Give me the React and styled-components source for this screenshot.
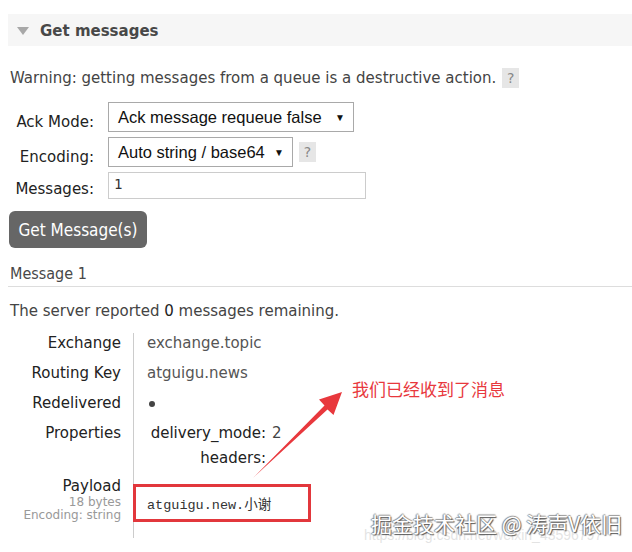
import React from 'react';
import styled, { createGlobalStyle } from 'styled-components';

const GlobalStyle = createGlobalStyle`
  body {
    margin: 0;
    background: #fff;
    font-family: "DejaVu Sans", Verdana, sans-serif;
    color: #444;
  }
`;

const Page = styled.div`
  position: relative;
  width: 632px;
  height: 552px;
  overflow: hidden;
  padding: 14px 0 0 8px;
  box-sizing: border-box;
`;

const SectionHeader = styled.div`
  height: 32px;
  background: #f6f6f6;
  display: flex;
  align-items: center;
  gap: 11px;
  padding: 2px 0 0 9px;
  box-sizing: border-box;
  font-size: 15px;
  font-weight: bold;
  color: #484848;
`;

const Caret = styled.span`
  width: 0;
  height: 0;
  border-left: 6px solid transparent;
  border-right: 6px solid transparent;
  border-top: 8px solid #a8a8a8;
`;

const Warning = styled.p`
  margin: 22px 0 0 2px;
  font-size: 15px;
  line-height: 20px;
  display: flex;
  align-items: center;
  gap: 6px;
  color: #444;
`;

const Help = styled.span`
  display: inline-flex;
  align-items: center;
  justify-content: center;
  width: 17px;
  height: 20px;
  background: #e6e6e6;
  color: #888;
  font-size: 14px;
`;

const Form = styled.div`
  margin-top: 14px;
  display: grid;
  grid-template-columns: 86px auto;
  column-gap: 14px;
  row-gap: 5px;
  align-items: center;
`;

const Label = styled.label`
  align-self: end;
  text-align: right;
  font-size: 15px;
  line-height: 20px;
  color: #222;
`;

const FieldRow = styled.div`
  display: flex;
  align-items: center;
  gap: 6px;
`;

const Select = styled.div`
  box-sizing: border-box;
  width: ${(p) => p.$width}px;
  height: ${(p) => p.$height}px;
  border: 1px solid #a9a9a9;
  display: flex;
  align-items: center;
  justify-content: space-between;
  padding: 0 8px 0 9px;
  font-family: "Liberation Sans", Arial, sans-serif;
  font-size: 16.5px;
  color: #111;
  background: #fff;
`;

const Arrow = styled.span`
  font-size: 10px;
  color: #111;
`;

const TextInput = styled.div`
  box-sizing: border-box;
  width: 258px;
  height: 27px;
  border: 1px solid #ccc;
  padding: 3px 5px;
  font-family: "DejaVu Sans Mono", monospace;
  font-size: 14px;
  color: #333;
`;

const Button = styled.button`
  margin-top: 12px;
  margin-left: 1px;
  width: 138px;
  height: 37px;
  border: none;
  border-radius: 6px;
  background: #666;
  color: #fff;
  font-family: "DejaVu Sans Condensed", "DejaVu Sans", sans-serif;
  font-stretch: condensed;
  font-size: 17px;
  padding: 0;
`;

const MessageTitle = styled.div`
  margin-top: 16px;
  padding: 0 0 2px 2px;
  border-bottom: 1px solid #ddd;
  font-family: "DejaVu Sans Condensed", "DejaVu Sans", sans-serif;
  font-stretch: condensed;
  font-size: 16px;
  line-height: 20px;
  color: #484848;
`;

const Remaining = styled.p`
  margin: 14px 0 0 2px;
  font-size: 15px;
  line-height: 20px;
  color: #444;
  b {
    font-weight: normal;
    color: #222;
  }
`;

const DetailTable = styled.div`
  margin-top: 12px;
  display: grid;
  grid-template-columns: 125px 300px;
`;

const KeyCell = styled.div`
  text-align: right;
  padding-right: 12px;
  height: ${(p) => p.$height || 30}px;
  font-size: 15px;
  line-height: 20px;
  color: #222;
  box-sizing: border-box;
`;

const SubNote = styled.div`
  font-size: 12px;
  line-height: 13px;
  color: #999;
`;

const ValueCell = styled.div`
  border-left: 1px solid #ccc;
  padding-left: 13px;
  height: ${(p) => p.$height || 30}px;
  font-size: 15px;
  line-height: 20px;
  color: #555;
  box-sizing: border-box;
`;

const Dot = styled.span`
  display: inline-block;
  width: 6px;
  height: 6px;
  border-radius: 50%;
  background: #444;
  margin: 0 0 0 2px;
  vertical-align: 1px;
`;

const PropGrid = styled.div`
  display: grid;
  grid-template-columns: 116px auto;
  column-gap: 6px;
  margin-left: 3px;
  row-gap: 5px;
  span:nth-child(odd) {
    text-align: right;
    color: #222;
  }
  span:nth-child(even) {
    color: #444;
  }
`;

const PayloadBox = styled.div`
  margin-left: -1px;
  width: 178px;
  height: 38px;
  box-sizing: border-box;
  border: 3px solid #e2373c;
  display: flex;
  align-items: center;
  padding-left: 11px;
  font-family: "Liberation Mono", "Noto Sans CJK SC", monospace;
  font-size: 13.5px;
  color: #333;
`;

const PayloadWrap = styled.div`
  border-left: 1px solid #ccc;
  height: 62px;
  padding-top: 8px;
  box-sizing: border-box;
`;

const Overlay = styled.svg`
  position: absolute;
  left: 0;
  top: 0;
  pointer-events: none;
`;

const Note = styled.div`
  position: absolute;
  left: 352px;
  top: 378px;
  font-family: "Noto Sans CJK SC", sans-serif;
  font-size: 17px;
  line-height: 22px;
  color: #e8383d;
`;

const Watermark = styled.div`
  position: absolute;
  left: 371px;
  top: 509px;
  font-family: "Noto Sans CJK SC", sans-serif;
  font-size: 21px;
  line-height: 28px;
  color: #fff;
  text-shadow: 1px 1px 1px #555, -1px 0 1px #888, 0 -1px 1px #999;
`;

const WatermarkUrl = styled.div`
  position: absolute;
  left: 364px;
  top: 527px;
  font-family: "Liberation Sans", sans-serif;
  font-size: 14px;
  color: rgba(200, 200, 200, 0.5);
  white-space: nowrap;
`;

export default function App() {
  return (
    <>
      <GlobalStyle />
      <Page>
        <SectionHeader>
          <Caret />
          Get messages
        </SectionHeader>
        <Warning>
          Warning: getting messages from a queue is a destructive action.
          <Help>?</Help>
        </Warning>
        <Form>
          <Label>Ack Mode:</Label>
          <FieldRow>
            <Select $width={246} $height={30}>
              Ack message requeue false <Arrow>▼</Arrow>
            </Select>
          </FieldRow>
          <Label>Encoding:</Label>
          <FieldRow>
            <Select $width={185} $height={30}>
              Auto string / base64 <Arrow>▼</Arrow>
            </Select>
            <Help>?</Help>
          </FieldRow>
          <Label>Messages:</Label>
          <FieldRow>
            <TextInput>1</TextInput>
          </FieldRow>
        </Form>
        <Button>Get Message(s)</Button>
        <MessageTitle>Message 1</MessageTitle>
        <Remaining>
          The server reported <b>0</b> messages remaining.
        </Remaining>
        <DetailTable>
          <KeyCell>Exchange</KeyCell>
          <ValueCell>exchange.topic</ValueCell>
          <KeyCell>Routing Key</KeyCell>
          <ValueCell>atguigu.news</ValueCell>
          <KeyCell>Redelivered</KeyCell>
          <ValueCell>
            <Dot />
          </ValueCell>
          <KeyCell $height={53}>Properties</KeyCell>
          <ValueCell $height={53}>
            <PropGrid>
              <span>delivery_mode:</span>
              <span>2</span>
              <span>headers:</span>
              <span></span>
            </PropGrid>
          </ValueCell>
          <KeyCell $height={62}>
            Payload
            <SubNote>18 bytes</SubNote>
            <SubNote>Encoding: string</SubNote>
          </KeyCell>
          <PayloadWrap>
            <PayloadBox>atguigu.new.小谢</PayloadBox>
          </PayloadWrap>
        </DetailTable>
        <Overlay width="632" height="552" viewBox="0 0 632 552">
          <polygon
            points="253,478 327.5,409.5 333.5,415 342,392 319,399.5 324.5,405.5"
            fill="#e8383d"
          />
        </Overlay>
        <Note>我们已经收到了消息</Note>
        <WatermarkUrl>https://blog.csdn.net/weixin_43596797</WatermarkUrl>
        <Watermark>掘金技术社区 @ 涛声V依旧</Watermark>
      </Page>
    </>
  );
}
